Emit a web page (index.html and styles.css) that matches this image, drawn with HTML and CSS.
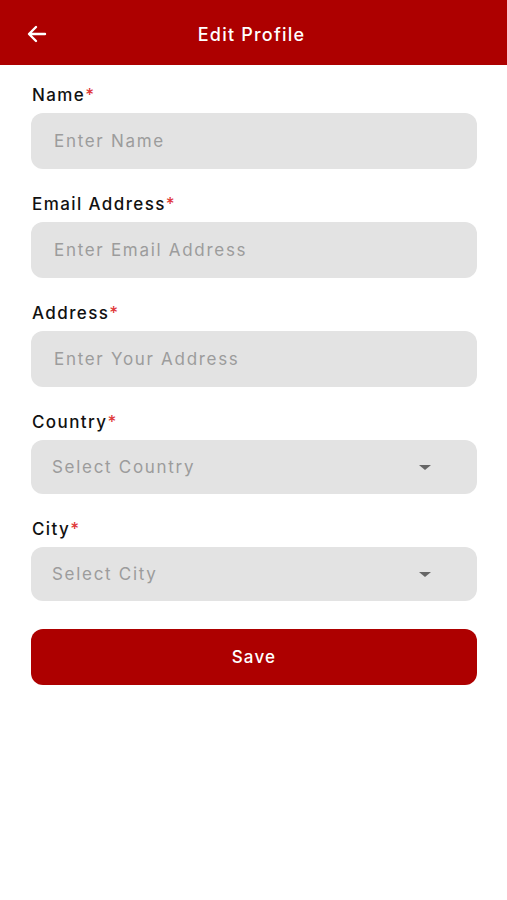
FILE: index.html
```html
<!DOCTYPE html>
<html>
<head>
<meta charset="utf-8">
<link rel="stylesheet" href="styles.css">
</head>
<body>
<header class="topbar">
  <button class="back" aria-label="Back">
    <svg width="24" height="24" viewBox="0 0 24 24"><path d="M20 12H5M11 5l-7 7 7 7" fill="none" stroke="#fff" stroke-width="2.4" stroke-linecap="round" stroke-linejoin="round"/></svg>
  </button>
  <h1 class="title">Edit Profile</h1>
</header>
<main class="form">
  <div class="field">
    <label class="label">Name<span class="req">*</span></label>
    <div class="input">Enter Name</div>
  </div>
  <div class="field">
    <label class="label">Email Address<span class="req">*</span></label>
    <div class="input">Enter Email Address</div>
  </div>
  <div class="field">
    <label class="label">Address<span class="req">*</span></label>
    <div class="input">Enter Your Address</div>
  </div>
  <div class="field">
    <label class="label">Country<span class="req">*</span></label>
    <div class="select"><span>Select Country</span><span class="caret"></span></div>
  </div>
  <div class="field">
    <label class="label">City<span class="req">*</span></label>
    <div class="select"><span>Select City</span><span class="caret"></span></div>
  </div>
  <button class="save">Save</button>
</main>
</body>
</html>
```
FILE: styles.css
```css
* { box-sizing: border-box; }
body {
  margin: 0;
  background: #fff;
  font-family: Inter, "Noto Sans", sans-serif;
  color: #111;
}
.topbar {
  height: 65px;
  background: #ad0000;
  display: flex;
  align-items: center;
  justify-content: center;
  position: relative;
}
.back {
  position: absolute;
  left: 25px;
  top: 22px;
  background: none;
  border: 0;
  padding: 0;
  width: 24px;
  height: 24px;
  display: flex;
}
.title {
  margin: 0;
  color: #fff;
  font-size: 18px;
  font-weight: 500;
  letter-spacing: 1.2px;
  margin-left: -4px;
  margin-top: 3px;
}
.form {
  padding: 18px 30px 0 31px;
  display: flex;
  flex-direction: column;
}
.field {
  display: flex;
  flex-direction: column;
  gap: 5px;
  margin-bottom: 23px;
}
.label {
  font-size: 17px;
  font-weight: 500;
  line-height: 25px;
  letter-spacing: 1.4px;
  padding-left: 1px;
}
.req { color: #e0393b; }
.input, .select {
  height: 56px;
  background: #e3e3e3;
  border-radius: 12px;
  display: flex;
  align-items: center;
  padding-left: 23px;
  font-size: 17px;
  letter-spacing: 1.7px;
  color: #9c9c9c;
}
.select {
  height: 54px;
  padding-left: 21px;
  padding-right: 46px;
  justify-content: space-between;
}
.caret {
  width: 0;
  height: 0;
  border-left: 6px solid transparent;
  border-right: 6px solid transparent;
  border-top: 5px solid #666;
}
.save {
  margin-top: 5px;
  height: 56px;
  border: 0;
  border-radius: 12px;
  background: #ad0000;
  color: #fff;
  font-family: inherit;
  font-size: 17px;
  font-weight: 500;
  letter-spacing: 1.2px;
}
```
